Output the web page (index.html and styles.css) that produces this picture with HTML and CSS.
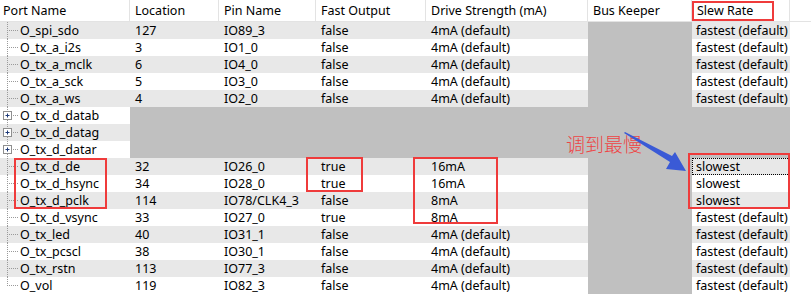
FILE: index.html
```html
<!DOCTYPE html>
<html>
<head>
<meta charset="utf-8">
<link rel="stylesheet" href="styles.css">
</head>
<body>
<div class="page">
  <div class="table">
    <div class="head">
      <div class="h port">Port Name</div>
      <div class="h">Location</div>
      <div class="h">Pin Name</div>
      <div class="h">Fast Output</div>
      <div class="h">Drive Strength (mA)</div>
      <div class="h">Bus Keeper</div>
      <div class="h">Slew Rate</div>
      <div class="h fill"></div>
    </div>

    <div class="row alt">
      <div class="c port"><svg class="tree" width="20" height="17"><path d="M7.5 0V17M9 8.5H19" /></svg>O_spi_sdo</div>
      <div class="c">127</div><div class="c">IO89_3</div><div class="c">false</div><div class="c">4mA (default)</div><div class="c bk"></div><div class="c slew">fastest (default)</div>
    </div>
    <div class="row">
      <div class="c port"><svg class="tree" width="20" height="17"><path d="M7.5 0V17M9 8.5H19" /></svg>O_tx_a_i2s</div>
      <div class="c">3</div><div class="c">IO1_0</div><div class="c">false</div><div class="c">4mA (default)</div><div class="c bk"></div><div class="c slew">fastest (default)</div>
    </div>
    <div class="row alt">
      <div class="c port"><svg class="tree" width="20" height="17"><path d="M7.5 0V17M9 8.5H19" /></svg>O_tx_a_mclk</div>
      <div class="c">6</div><div class="c">IO4_0</div><div class="c">false</div><div class="c">4mA (default)</div><div class="c bk"></div><div class="c slew">fastest (default)</div>
    </div>
    <div class="row">
      <div class="c port"><svg class="tree" width="20" height="17"><path d="M7.5 0V17M9 8.5H19" /></svg>O_tx_a_sck</div>
      <div class="c">5</div><div class="c">IO3_0</div><div class="c">false</div><div class="c">4mA (default)</div><div class="c bk"></div><div class="c slew">fastest (default)</div>
    </div>
    <div class="row alt">
      <div class="c port"><svg class="tree" width="20" height="17"><path d="M7.5 0V17M9 8.5H19" /></svg>O_tx_a_ws</div>
      <div class="c">4</div><div class="c">IO2_0</div><div class="c">false</div><div class="c">4mA (default)</div><div class="c bk"></div><div class="c slew">fastest (default)</div>
    </div>

    <div class="row">
      <div class="c port"><svg class="tree" width="20" height="17"><path d="M7.5 0V4M7.5 13V17M13 8.5H19" /><rect class="box" x="3.5" y="4.5" width="8" height="8"/><path class="plus" d="M5.5 8.5H9.5M7.5 6.5V10.5"/></svg>O_tx_d_datab</div>
      <div class="c span"></div>
    </div>
    <div class="row alt">
      <div class="c port"><svg class="tree" width="20" height="17"><path d="M7.5 0V4M7.5 13V17M13 8.5H19" /><rect class="box" x="3.5" y="4.5" width="8" height="8"/><path class="plus" d="M5.5 8.5H9.5M7.5 6.5V10.5"/></svg>O_tx_d_datag</div>
      <div class="c span"></div>
    </div>
    <div class="row">
      <div class="c port"><svg class="tree" width="20" height="17"><path d="M7.5 0V4M7.5 13V17M13 8.5H19" /><rect class="box" x="3.5" y="4.5" width="8" height="8"/><path class="plus" d="M5.5 8.5H9.5M7.5 6.5V10.5"/></svg>O_tx_d_datar</div>
      <div class="c span"></div>
    </div>

    <div class="row alt">
      <div class="c port"><svg class="tree" width="20" height="17"><path d="M7.5 0V17M9 8.5H19" /></svg>O_tx_d_de</div>
      <div class="c">32</div><div class="c">IO26_0</div><div class="c">true</div><div class="c">16mA</div><div class="c bk"></div><div class="c slew focus">slowest</div>
    </div>
    <div class="row">
      <div class="c port"><svg class="tree" width="20" height="17"><path d="M7.5 0V17M9 8.5H19" /></svg>O_tx_d_hsync</div>
      <div class="c">34</div><div class="c">IO28_0</div><div class="c">true</div><div class="c">16mA</div><div class="c bk"></div><div class="c slew">slowest</div>
    </div>
    <div class="row alt">
      <div class="c port"><svg class="tree" width="20" height="17"><path d="M7.5 0V17M9 8.5H19" /></svg>O_tx_d_pclk</div>
      <div class="c">114</div><div class="c">IO78/CLK4_3</div><div class="c">false</div><div class="c">8mA</div><div class="c bk"></div><div class="c slew">slowest</div>
    </div>
    <div class="row">
      <div class="c port"><svg class="tree" width="20" height="17"><path d="M7.5 0V17M9 8.5H19" /></svg>O_tx_d_vsync</div>
      <div class="c">33</div><div class="c">IO27_0</div><div class="c">true</div><div class="c">8mA</div><div class="c bk"></div><div class="c slew">fastest (default)</div>
    </div>
    <div class="row alt">
      <div class="c port"><svg class="tree" width="20" height="17"><path d="M7.5 0V17M9 8.5H19" /></svg>O_tx_led</div>
      <div class="c">40</div><div class="c">IO31_1</div><div class="c">false</div><div class="c">4mA (default)</div><div class="c bk"></div><div class="c slew">fastest (default)</div>
    </div>
    <div class="row">
      <div class="c port"><svg class="tree" width="20" height="17"><path d="M7.5 0V17M9 8.5H19" /></svg>O_tx_pcscl</div>
      <div class="c">38</div><div class="c">IO30_1</div><div class="c">false</div><div class="c">4mA (default)</div><div class="c bk"></div><div class="c slew">fastest (default)</div>
    </div>
    <div class="row alt">
      <div class="c port"><svg class="tree" width="20" height="17"><path d="M7.5 0V17M9 8.5H19" /></svg>O_tx_rstn</div>
      <div class="c">113</div><div class="c">IO77_3</div><div class="c">false</div><div class="c">4mA (default)</div><div class="c bk"></div><div class="c slew">fastest (default)</div>
    </div>
    <div class="row">
      <div class="c port"><svg class="tree" width="20" height="17"><path d="M7.5 0V9M9 8.5H19" /></svg>O_vol</div>
      <div class="c">119</div><div class="c">IO82_3</div><div class="c">false</div><div class="c">4mA (default)</div><div class="c bk"></div><div class="c slew">fastest (default)</div>
    </div>
  </div>

  <div class="mark mark-slew-head"></div>
  <div class="mark mark-ports"></div>
  <div class="mark mark-true"></div>
  <div class="mark mark-ma"></div>
  <div class="mark mark-slow"></div>
  <div class="note">调到最慢</div>
  <svg class="arrow" width="811" height="303" viewBox="0 0 811 303">
    <polygon points="625,132 672,156 675,152 686,171 666,169 670,162 624,133" />
  </svg>
</div>
</body>
</html>
```

FILE: styles.css
```css
html, body {
  margin: 0;
  padding: 0;
  background: #ffffff;
}

.page {
  position: relative;
  width: 811px;
  height: 303px;
  overflow: hidden;
  font-family: "Noto Sans", "Liberation Sans", "Noto Sans CJK SC", sans-serif;
  font-size: 12.5px;
  color: #000;
}

.table {
  display: flex;
  flex-direction: column;
}

.head {
  display: grid;
  grid-template-columns: 130px 89px 97px 110px 162px 104px 98px 1fr;
  height: 21px;
  border-bottom: 1px solid #e3e3e3;
  background: #ffffff;
}

.h {
  border-right: 1px solid #e3e3e3;
  padding-left: 5px;
  line-height: 21px;
  white-space: nowrap;
  overflow: hidden;
}

.h.port {
  padding-left: 3px;
}

.h.fill {
  border-right: none;
}

.row {
  display: grid;
  grid-template-columns: 130px 89px 97px 110px 162px 104px 98px;
  width: 790px;
  height: 17px;
  background: #ffffff;
}

.row.alt {
  background: #e8e8e8;
}

.c {
  padding-left: 5px;
  line-height: 17px;
  white-space: nowrap;
  overflow: hidden;
}

.c.port {
  display: flex;
  align-items: center;
  padding-left: 0;
}

.tree {
  flex: none;
  display: block;
}

.tree path {
  fill: none;
  stroke: #9a9a9a;
  stroke-width: 1;
  stroke-dasharray: 1 1;
}

.tree .box {
  fill: #ffffff;
  stroke: #8f8f8f;
  stroke-width: 1;
}

.tree .plus {
  stroke: #1e3a78;
  stroke-dasharray: none;
}

.c.bk {
  background: #c0c0c0;
}

.c.span {
  grid-column: 2 / 8;
  background: #c0c0c0;
}

.c.slew {
  padding-left: 4px;
}

.c.focus {
  outline: 1px dotted #000;
  outline-offset: -1px;
}

.mark {
  position: absolute;
  border: 2px solid #ef3b3b;
  box-sizing: border-box;
}

.mark-slew-head {
  left: 692px;
  top: 1px;
  width: 82px;
  height: 20px;
}

.mark-ports {
  left: 14px;
  top: 158px;
  width: 93px;
  height: 51px;
}

.mark-true {
  left: 306px;
  top: 157px;
  width: 57px;
  height: 35px;
}

.mark-ma {
  left: 413px;
  top: 157px;
  width: 85px;
  height: 67px;
}

.mark-slow {
  left: 688px;
  top: 153px;
  width: 102px;
  height: 56px;
}

.note {
  position: absolute;
  left: 566px;
  top: 131px;
  font-family: "Noto Sans CJK SC", sans-serif;
  font-size: 19px;
  line-height: 25px;
  color: #ee4444;
  font-weight: 300;
}

.arrow {
  position: absolute;
  left: 0;
  top: 0;
  pointer-events: none;
}

.arrow polygon {
  fill: #3a5ad6;
}
```
